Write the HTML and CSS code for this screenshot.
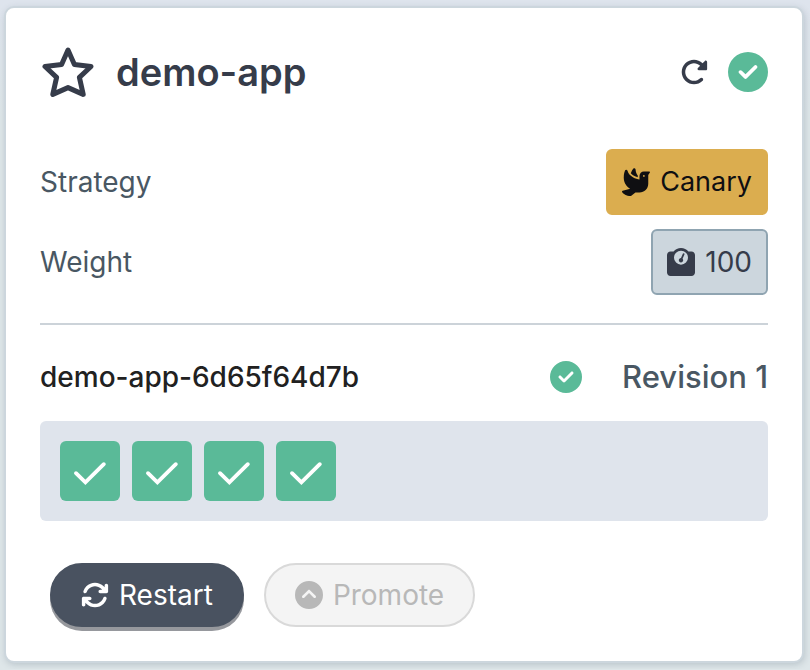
FILE: index.html
```
<!DOCTYPE html>
<html lang="en">
<head>
<meta charset="utf-8">
<meta name="viewport" content="width=device-width, initial-scale=1">
<title>demo-app</title>
<link rel="stylesheet" href="styles.css">
</head>
<body>
<svg class="sprite" aria-hidden="true">
  <symbol id="circle-check" viewBox="0 0 512 512"><path d="M256 512A256 256 0 1 0 256 0a256 256 0 1 0 0 512zM369 209L241 337c-9.4 9.4-24.6 9.4-33.9 0l-64-64c-9.4-9.4-9.4-24.6 0-33.9s24.6-9.4 33.9 0l47 47L335 175c9.4-9.4 24.6-9.4 33.9 0s9.4 24.6 0 33.9z"/></symbol>
  <symbol id="check" viewBox="0 0 60 60"><path d="M16 32.2L25.4 41.3L43.8 23.2" fill="none" stroke="currentColor" stroke-width="3.9" stroke-linecap="round" stroke-linejoin="miter"/></symbol>
</svg>
<main class="card">
  <header class="header">
    <button class="icon-button" type="button" aria-label="Favorite">
      <svg class="star" viewBox="0 0 56 50" aria-hidden="true"><path d="M28 3L34.4 17.4L51 19.5L39.4 30.4L43.2 47.4L28 40.6L12.8 47.4L16.6 30.4L5 19.5L21.6 17.4Z" fill="none" stroke="currentColor" stroke-width="5" stroke-linejoin="round"/></svg>
    </button>
    <h1 class="title">demo-app</h1>
    <button class="icon-button" type="button" aria-label="Refresh">
      <svg class="icon" viewBox="0 0 512 512" aria-hidden="true"><path d="M463.5 224H472c13.3 0 24-10.7 24-24V72c0-9.7-5.8-18.5-14.8-22.2s-19.3-1.7-26.2 5.2L413.4 96.6c-87.6-86.5-228.7-86.2-315.8 1c-87.5 87.5-87.5 229.3 0 316.8s229.3 87.5 316.8 0c12.5-12.5 12.5-32.8 0-45.3s-32.8-12.5-45.3 0c-62.5 62.5-163.8 62.5-226.3 0s-62.5-163.8 0-226.3c62.2-62.2 162.7-62.5 225.3-1L327 183c-6.9 6.9-8.9 17.2-5.2 26.2s12.5 14.8 22.2 14.8H463.5z"/></svg>
    </button>
    <svg class="status status-large" role="img" aria-label="Healthy"><use href="#circle-check"/></svg>
  </header>
  <dl class="info">
    <div class="row">
      <dt>Strategy</dt>
      <dd class="tag tag-canary">
        <svg class="icon" viewBox="0 0 512 512" aria-hidden="true"><path d="M160.8 96.5c14 17 31 30.9 49.5 42.2c25.9 15.8 53.7 25.9 77.7 31.6V138.8C265.8 108.5 250 71.5 248.6 28c-.4-11.3-7.5-21.5-18.4-24.4c-7.6-2-15.8-.2-21 5.8c-13.3 15.4-32.7 44.6-48.4 87.2zM320 144v30.6l0 0v1.3l0 0 0 32.1c-60.8-5.1-185-43.8-219.3-157.2C97.4 40 87.9 32 76.6 32c-7.9 0-15.3 3.9-18.8 11C46.8 65.9 32 112.1 32 176c0 116.9 80.1 180.5 118.4 202.8L11.8 416.6C6.7 418 2.6 421.8 .9 426.8s-.8 10.6 2.3 14.8C21.7 466.2 77.3 512 160 512c3.6 0 7.2-1.2 10-3.5L245.6 448H320c88.4 0 160-71.6 160-160V128l29.9-44.9c1.3-2 2.1-4.4 2.1-6.8c0-6.8-5.5-12.3-12.3-12.3H400c-44.2 0-80 35.8-80 80zm80-16a16 16 0 1 1 0 32 16 16 0 1 1 0-32z"/></svg>
        Canary
      </dd>
    </div>
    <div class="row">
      <dt>Weight</dt>
      <dd class="tag">
        <svg class="icon" viewBox="0 0 512 512" aria-hidden="true"><path d="M128 176a128 128 0 1 1 256 0 128 128 0 1 1 -256 0zM391.8 64C359.5 24.9 310.7 0 256 0S152.5 24.9 120.2 64H64C28.7 64 0 92.7 0 128V448c0 35.3 28.7 64 64 64H448c35.3 0 64-28.7 64-64V128c0-35.3-28.7-64-64-64H391.8zM296 224c0-10.6-4.1-20.2-10.9-27.4l33.6-78.3c3.5-8.1-.3-17.5-8.4-21s-17.5 .3-21 8.4L255.7 184c-22 .1-39.7 18-39.7 40c0 22.1 17.9 40 40 40s40-17.9 40-40z"/></svg>
        100
      </dd>
    </div>
  </dl>
  <section class="replicaset">
    <div class="replicaset-head">
      <h2 class="name">demo-app-6d65f64d7b</h2>
      <svg class="status" role="img" aria-label="Healthy"><use href="#circle-check"/></svg>
      <span class="revision">Revision 1</span>
    </div>
    <ul class="pods">
      <li class="pod"><svg class="pod-icon" role="img" aria-label="Running"><use href="#check"/></svg></li>
      <li class="pod"><svg class="pod-icon" role="img" aria-label="Running"><use href="#check"/></svg></li>
      <li class="pod"><svg class="pod-icon" role="img" aria-label="Running"><use href="#check"/></svg></li>
      <li class="pod"><svg class="pod-icon" role="img" aria-label="Running"><use href="#check"/></svg></li>
    </ul>
  </section>
  <footer class="actions">
    <button class="button button-primary" type="button">
      <svg class="icon" viewBox="0 0 512 512" aria-hidden="true"><path d="M105.1 202.6c7.7-21.8 20.2-42.3 37.8-59.8c62.5-62.5 163.8-62.5 226.3 0L386.3 160H352c-17.7 0-32 14.3-32 32s14.3 32 32 32H463.5c0 0 0 0 0 0h.4c17.7 0 32-14.3 32-32V80c0-17.7-14.3-32-32-32s-32 14.3-32 32v35.2L414.4 97.6c-87.5-87.5-229.3-87.5-316.8 0C73.2 122 55.6 150.7 44.8 181.4c-5.9 16.7 2.9 34.9 19.5 40.8s34.9-2.9 40.8-19.5zM39 289.3c-5 1.5-9.8 4.2-13.7 8.2c-4 4-6.7 8.8-8.1 14c-.3 1.2-.6 2.5-.8 3.8c-.3 1.7-.4 3.4-.4 5.1V432c0 17.7 14.3 32 32 32s32-14.3 32-32V396.9l17.6 17.5 0 0c87.5 87.4 229.3 87.4 316.7 0c24.4-24.4 42.1-53.1 52.9-83.7c5.9-16.7-2.9-34.9-19.5-40.8s-34.9 2.9-40.8 19.5c-7.7 21.8-20.2 42.3-37.8 59.8c-62.5 62.5-163.8 62.5-226.3 0l-.1-.1L125.6 352H160c17.7 0 32-14.3 32-32s-14.3-32-32-32H48.4c-1.6 0-3.2 .1-4.8 .3s-3.1 .5-4.6 1z"/></svg>
      Restart
    </button>
    <button class="button" type="button" disabled>
      <svg class="icon" viewBox="0 0 512 512" aria-hidden="true"><path d="M256 0a256 256 0 1 0 0 512A256 256 0 1 0 256 0zM377 271c9.4 9.4 9.4 24.6 0 33.9s-24.6 9.4-33.9 0l-87-87-87 87c-9.4 9.4-24.6 9.4-33.9 0s-9.4-24.6 0-33.9L239 167c9.4-9.4 24.6-9.4 33.9 0L377 271z"/></svg>
      Promote
    </button>
  </footer>
</main>
</body>
</html>
```
FILE: styles.css
```
* {
  box-sizing: border-box;
}

body {
  margin: 0;
  padding: 6px 6px 6px 4px;
  background: #dee6e9 linear-gradient(#dee4ed, #dee6e9 120px) no-repeat;
  color: #495763;
  font: 28px/32px Inter, "Liberation Sans", sans-serif;
}

svg {
  display: block;
  flex: none;
  fill: currentColor;
}

.sprite {
  position: absolute;
  width: 0;
  height: 0;
}

.card {
  padding: 32px 34px;
  border: 2px solid #ccd6dd;
  border-radius: 10px;
  background: #fff;
  box-shadow: 1px 2px 6px rgba(109, 127, 139, 0.3);
}

.header {
  display: flex;
  align-items: center;
  gap: 20px;
  height: 64px;
  color: #363c4a;
}

.icon-button {
  padding: 0;
  border: 0;
  background: none;
  color: inherit;
  cursor: pointer;
}

.star {
  width: 56px;
  height: 50px;
}

.icon {
  width: 28px;
  height: 28px;
}

.title {
  flex: 1;
  margin: 0;
  font-size: 38px;
  font-weight: 600;
  line-height: 48px;
}

.status {
  width: 32px;
  height: 32px;
  color: #5aba98;
}

.status-large {
  width: 40px;
  height: 40px;
}

.info {
  display: grid;
  gap: 14px;
  margin: 45px 0 0;
  padding-bottom: 28px;
  border-bottom: 2px solid #ccd3d9;
}

.row {
  display: flex;
  align-items: center;
  justify-content: space-between;
}

.tag {
  display: flex;
  align-items: center;
  gap: 10px;
  height: 66px;
  margin: 0;
  padding: 0 14px;
  border: 2px solid #8fa4b1;
  border-radius: 6px;
  background: #ccd6dd;
  color: #363c4a;
}

.tag-canary {
  border-color: #dbad4f;
  background: #dbad4f;
  color: #0f0f12;
  font-size: 27px;
}

.replicaset-head {
  display: flex;
  align-items: center;
  height: 40px;
  margin: 32px 0 24px;
}

.name {
  flex: 1;
  margin: 0;
  color: #212121;
  font-size: 28px;
  font-weight: 500;
}

.revision {
  margin-left: 40px;
  font-size: 31px;
  font-weight: 500;
}

.pods {
  display: flex;
  flex-wrap: wrap;
  gap: 12px;
  margin: 0;
  padding: 20px;
  border-radius: 6px;
  background: #dfe4ec;
  list-style: none;
}

.pod {
  width: 60px;
  height: 60px;
  border-radius: 6px;
  background: #5aba98;
  color: #fff;
}

.pod-icon {
  width: 60px;
  height: 60px;
}

.actions {
  display: flex;
  gap: 20px;
  margin: 42px 10px 2px;
}

.button {
  display: flex;
  align-items: center;
  gap: 10px;
  height: 64px;
  padding: 0 29px;
  border: 2px solid #d9d9d9;
  border-radius: 32px;
  background: #f4f4f4;
  color: #b8b8b8;
  font: inherit;
}

.button-primary {
  border-color: #495260;
  background: #495260;
  box-shadow: 0 4px 0 #96989d;
  color: #fff;
  cursor: pointer;
}
```
